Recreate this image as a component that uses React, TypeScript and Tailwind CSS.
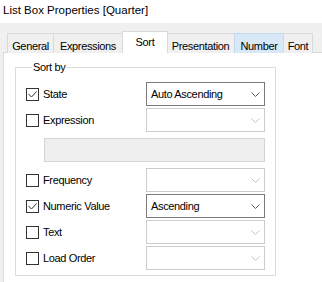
const font = { fontFamily: '"Liberation Sans", Arial, sans-serif' };

type Tab = { label: string; width: string; state?: 'selected' | 'hover' };

const tabs: Tab[] = [
  { label: 'General', width: 'w-[47px]' },
  { label: 'Expressions', width: 'w-[70px]' },
  { label: 'Sort', width: 'w-[46px]', state: 'selected' },
  { label: 'Presentation', width: 'w-[69px]' },
  { label: 'Number', width: 'w-[50px]', state: 'hover' },
  { label: 'Font', width: 'w-[30px]' },
];

function Chevron({ disabled }: { disabled?: boolean }) {
  return (
    <svg width="9" height="5" viewBox="0 0 9 5" fill="none">
      <path d="M0.5 0.5 L4.5 4.5 L8.5 0.5" stroke={disabled ? '#c4c4c4' : '#5a5a5a'} strokeWidth="1" />
    </svg>
  );
}

function Checkbox({ checked }: { checked?: boolean }) {
  return (
    <div className="w-[13px] h-[13px] border border-[#333333] bg-white flex items-center justify-center shrink-0">
      {checked && (
        <svg width="11" height="11" viewBox="0 0 11 11" fill="none">
          <path d="M1.5 5 L4.5 8 L9.5 2.5" stroke="#333333" strokeWidth="1" />
        </svg>
      )}
    </div>
  );
}

function Dropdown({ value }: { value?: string }) {
  const disabled = !value;
  return (
    <div
      className={`w-[119px] h-[24px] ml-auto flex items-center justify-between pl-[4px] pr-[4px] bg-white border ${
        disabled ? 'border-[#cccccc]' : 'border-[#7a7a7a]'
      }`}
    >
      <span className="text-[#000000]">{value}</span>
      <Chevron disabled={disabled} />
    </div>
  );
}

function SortRow({ label, checked, value }: { label: string; checked?: boolean; value?: string }) {
  return (
    <div className="flex items-center h-[24px]">
      <Checkbox checked={checked} />
      <span className="ml-[4px]">{label}</span>
      <Dropdown value={value} />
    </div>
  );
}

export default function App() {
  return (
    <div
      className="w-[322px] h-[282px] bg-[#f0f0f0] overflow-hidden text-[11px] tracking-[-0.35px] text-black"
      style={font}
    >
      {/* Window title */}
      <div className="h-[23px] bg-white pl-[3px] pt-[3px] text-[11.5px] tracking-normal leading-[15px]">
        List Box Properties [Quarter]
      </div>

      {/* Tab strip */}
      <div className="flex items-end h-[22px] mt-[8px] pl-[7px]">
        {tabs.map((t, i) => {
          const base = `${t.width} flex justify-center border border-b-0 ${i > 0 ? '-ml-px' : ''}`;
          if (t.state === 'selected') {
            return (
              <div key={t.label} className={`${base} relative z-10 h-[22px] bg-white border-[#d9d9d9] pt-[2px] -mr-px`}>
                {t.label}
              </div>
            );
          }
          return (
            <div
              key={t.label}
              className={`${base} h-[20px] pt-[4px] ${
                t.state === 'hover' ? 'bg-[#d9e8f7] border-[#c3d9ee]' : 'bg-[#f0f0f0] border-[#d9d9d9]'
              }`}
            >
              {t.label}
            </div>
          );
        })}
      </div>

      {/* Tab page */}
      <div className="-mt-px ml-[3px] h-[240px] bg-white border-l border-t border-[#d9d9d9] pl-[11px] pt-[7px]">
        <fieldset className="w-[261px] border border-[#dcdcdc] pl-[10px] pr-[10px] pb-[5px]">
          <legend className="ml-[6px] px-[1px] leading-[14px]">Sort by</legend>
          <div className="flex flex-col gap-[2px] mt-[8px]">
            <SortRow label="State" checked value="Auto Ascending" />
            <SortRow label="Expression" />
          </div>
          <div className="ml-[18px] mt-[6px] h-[24px] bg-[#efefef] border border-[#d4d4d4]" />
          <div className="flex flex-col gap-[2px] mt-[6px]">
            <SortRow label="Frequency" />
            <SortRow label="Numeric Value" checked value="Ascending" />
            <SortRow label="Text" />
            <SortRow label="Load Order" />
          </div>
        </fieldset>
      </div>
    </div>
  );
}
